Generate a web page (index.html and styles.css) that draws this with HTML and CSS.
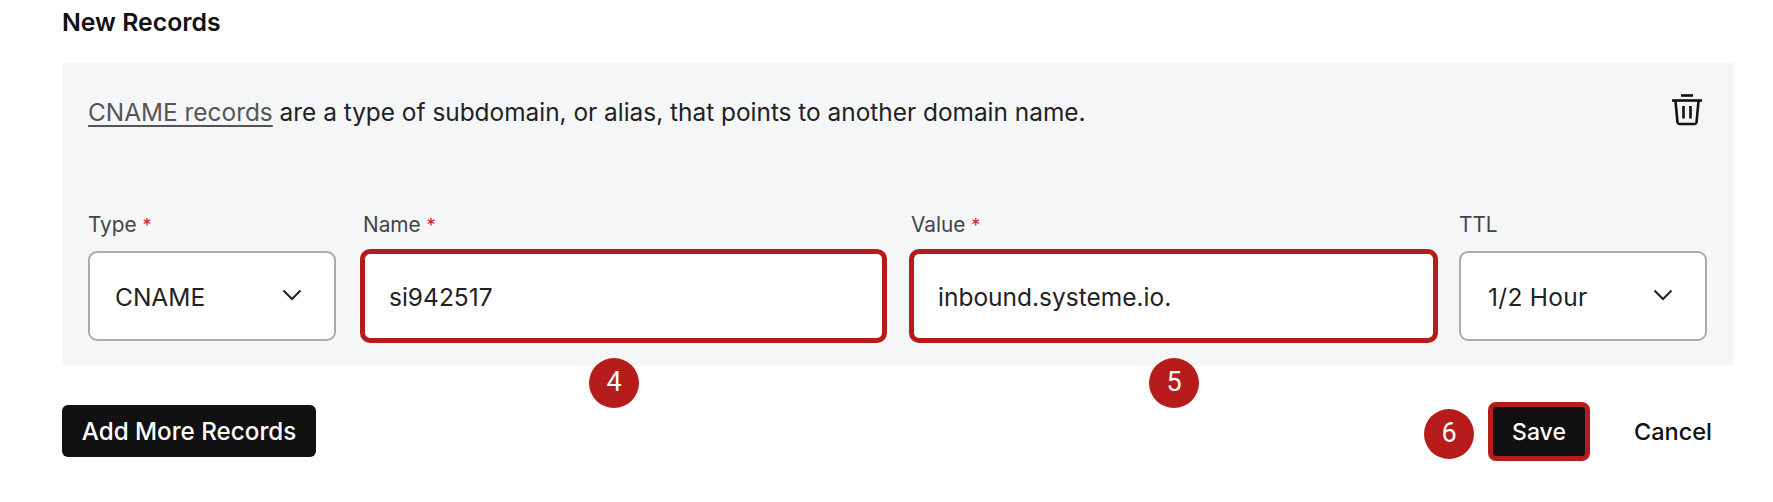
FILE: index.html
```html
<!DOCTYPE html>
<html lang="en">
<head>
<meta charset="utf-8">
<title>New Records</title>
<link rel="stylesheet" href="styles.css">
</head>
<body>
<main class="page">
  <h2 class="title">New Records</h2>
  <section class="panel">
    <div class="intro">
      <p class="desc"><a class="link" href="#">CNAME records</a> are a type of subdomain, or alias, that points to another domain name.</p>
      <svg class="trash" viewBox="0 0 32 32" fill="none" stroke="#111" stroke-width="2.6" aria-hidden="true">
        <path d="M1 6.5h30"/>
        <path d="M10 1.5h12"/>
        <path d="M4.5 7l2 21.5a2 2 0 0 0 2 1.5h15a2 2 0 0 0 2-1.5l2-21.5"/>
        <path d="M12.5 12v12.5M19.5 12v12.5"/>
      </svg>
    </div>
    <div class="fields">
      <div class="field field-type">
        <label class="label">Type <span class="req">*</span></label>
        <div class="control select">
          <span>CNAME</span>
          <svg class="chev" viewBox="0 0 20 12" fill="none" stroke="#222" stroke-width="2"><path d="M1.5 1.5L10 10l8.5-8.5"/></svg>
        </div>
      </div>
      <div class="field field-name">
        <label class="label label-inset">Name <span class="req">*</span></label>
        <div class="control input marked"><span>si942517</span></div>
        <span class="badge badge-4">4</span>
      </div>
      <div class="field field-value">
        <label class="label label-inset2">Value <span class="req">*</span></label>
        <div class="control input marked"><span>inbound.systeme.io.</span></div>
        <span class="badge badge-5">5</span>
      </div>
      <div class="field field-ttl">
        <label class="label">TTL</label>
        <div class="control select">
          <span>1/2 Hour</span>
          <svg class="chev" viewBox="0 0 20 12" fill="none" stroke="#222" stroke-width="2"><path d="M1.5 1.5L10 10l8.5-8.5"/></svg>
        </div>
      </div>
    </div>
  </section>
  <div class="actions">
    <button class="btn add" type="button">Add More Records</button>
    <div class="right">
      <span class="badge badge-6">6</span>
      <button class="btn save" type="button">Save</button>
      <button class="cancel" type="button">Cancel</button>
    </div>
  </div>
</main>
</body>
</html>
```

FILE: styles.css
```css
* { box-sizing: border-box; }
html, body { margin: 0; background: #fff; }
body {
  width: 1773px;
  height: 502px;
  overflow: hidden;
  font-family: Inter, "Liberation Sans", sans-serif;
  color: #1b1b1b;
}
.page { padding: 0 39px 0 62px; }
.title {
  margin: 0;
  height: 63px;
  padding-top: 7px;
  font-size: 24.8px;
  line-height: 30px;
  font-weight: 600;
  color: #111;
}
.panel {
  height: 302px;
  background: #f5f6f8;
  padding: 0 27px 0 26px;
}
.intro {
  height: 147px;
  display: flex;
  justify-content: space-between;
  align-items: flex-start;
}
.desc {
  margin: 0;
  padding-top: 33px;
  font-size: 24.4px;
  line-height: 32px;
  color: #222;
}
.link { color: #555; text-decoration: underline; text-underline-offset: 4px; text-decoration-thickness: 2px; }
.trash { width: 32px; height: 32px; margin: 31px 4px 0 0; }
.fields { display: flex; align-items: flex-start; }
.field { position: relative; display: flex; flex-direction: column; }
.field-type { width: 248px; margin-right: 24px; }
.field-name { width: 527px; margin-right: 22px; }
.field-value { width: 529px; margin-right: 21px; }
.field-ttl { width: 248px; }
.label {
  height: 41px;
  padding-top: 3px;
  font-size: 20.8px;
  line-height: 24px;
  color: #444;
}
.label-inset { padding-left: 3px; }
.label-inset2 { padding-left: 2px; }
.req { color: #c62828; font-size: 18px; }
.control {
  height: 90px;
  background: #fff;
  border-radius: 9px;
  display: flex;
  align-items: center;
  font-size: 24.5px;
  color: #222;
  padding-top: 2px;
}
.select {
  border: 2px solid #ababab;
  padding-left: 25px;
  padding-right: 32px;
  justify-content: space-between;
}
.field-ttl .select { padding-left: 27px; letter-spacing: 0.3px; }
.input {
  margin-top: -2px;
  height: 94px;
  padding-left: 24px;
}
.marked { border: 5px solid #b71c1c; border-radius: 10px; }
.chev { width: 20px; height: 12px; margin-top: -4px; }
.badge {
  position: absolute;
  width: 50px;
  height: 50px;
  border-radius: 50%;
  background: #b71c1c;
  color: #fff;
  display: flex;
  align-items: center;
  justify-content: center;
  font-family: Roboto, sans-serif;
  font-size: 27px;
  padding-bottom: 2px;
}
.badge-4 { left: 229px; top: 148px; }
.badge-5 { left: 240px; top: 148px; }
.actions {
  position: relative;
  display: flex;
  justify-content: space-between;
  align-items: flex-start;
  padding-top: 37px;
  padding-right: 22px;
}
.btn {
  background: #111;
  color: #fff;
  border-radius: 6px;
  border: 0;
  font-family: inherit;
  font-size: 24.2px;
  font-weight: 500;
  height: 52px;
  padding: 0;
}
.add { width: 254px; margin-top: 3px; }
.right { display: flex; align-items: flex-start; }
.badge-6 { left: 1362px; top: 44px; }
.save {
  width: 102px;
  height: 59px;
  border: 5px solid #b71c1c;
  border-radius: 8px;
  margin-right: 44px;
  font-size: 23px;
}
.cancel {
  border: 0;
  background: none;
  padding: 0;
  font-family: inherit;
  font-size: 23.5px;
  font-weight: 500;
  color: #111;
  height: 59px;
}
```
